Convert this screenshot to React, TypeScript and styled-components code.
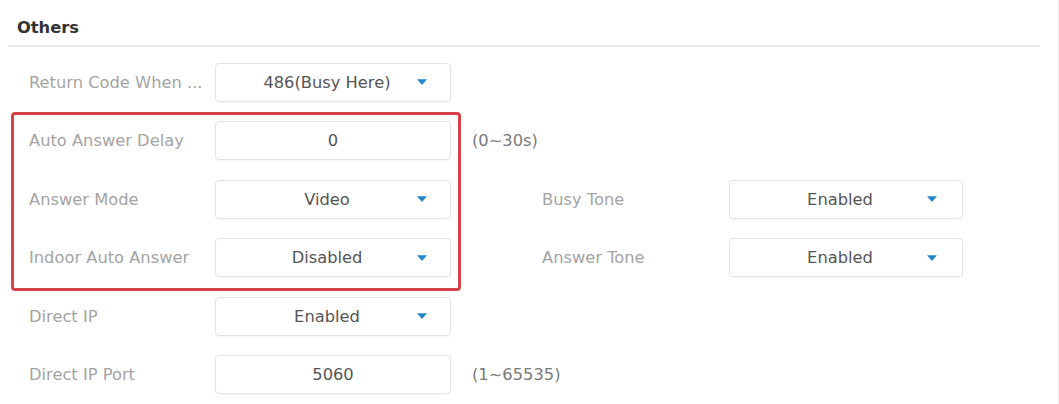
import React from "react";
import styled, { createGlobalStyle } from "styled-components";

const Global = createGlobalStyle`
  html, body { margin: 0; padding: 0; background: #ffffff; }
  body { font-family: "DejaVu Sans", Verdana, sans-serif; }
  * { box-sizing: border-box; }
`;

const Page = styled.div`
  width: 1059px;
  height: 404px;
  background: #fff;
  border-right: 1px solid #f1f1f1;
  overflow: hidden;
`;

const Header = styled.div`
  margin-left: 8px;
  width: 1032px;
  padding: 18px 0 7px 9px;
  border-bottom: 2px solid #ebebeb;
  font-size: 16.3px;
  line-height: 20px;
  font-weight: bold;
  color: #333;
`;

const Form = styled.div`
  display: flex;
  padding-left: 29px;
  margin-top: 16px;
`;

const Column = styled.div<{ $width: number; $offsetTop?: number }>`
  display: flex;
  flex-direction: column;
  gap: 20.6px;
  width: ${(p) => p.$width}px;
  margin-top: ${(p) => p.$offsetTop ?? 0}px;
  flex-shrink: 0;
`;

const Highlight = styled.div`
  display: flex;
  flex-direction: column;
  gap: 20.6px;
  box-sizing: content-box;
  width: 422px;
  margin: -9.6px 0 -14.2px -18px;
  padding: 6.6px 7px 11.2px 15px;
  border: 3px solid #d8434b;
  border-radius: 4px;
`;

const Row = styled.div`
  display: flex;
  align-items: center;
  height: 38px;
`;

const Label = styled.div<{ $width: number }>`
  width: ${(p) => p.$width}px;
  flex-shrink: 0;
  font-size: 16.3px;
  color: #a4a4a4;
  white-space: nowrap;
  overflow: hidden;
`;

const Box = styled.div<{ $width: number }>`
  position: relative;
  width: ${(p) => p.$width}px;
  height: 39px;
  flex-shrink: 0;
  display: flex;
  align-items: center;
  justify-content: center;
  border: 1px solid #e4e4e4;
  border-radius: 4px;
  box-shadow: 0 1px 2px rgba(0, 0, 0, 0.04);
  background: #fff;
  font-size: 16.3px;
  color: #555;
`;

const SelectBox = styled(Box)`
  padding-right: 12px;
`;

const Arrow = styled.svg<{ $right: number }>`
  position: absolute;
  right: ${(p) => p.$right}px;
  top: 50%;
  margin-top: -3px;
`;

const Hint = styled.div`
  margin-left: 21px;
  flex-shrink: 0;
  white-space: nowrap;
  font-size: 16.3px;
  color: #7a7a7a;
`;

type FieldProps = {
  label: string;
  value: string;
  select?: boolean;
  hint?: string;
  labelWidth?: number;
  boxWidth?: number;
  arrowRight?: number;
};

const Field = ({
  label,
  value,
  select,
  hint,
  labelWidth = 186,
  boxWidth = 236,
  arrowRight = 23,
}: FieldProps) => (
  <Row>
    <Label $width={labelWidth}>{label}</Label>
    {select ? (
      <SelectBox $width={boxWidth}>
        {value}
        <Arrow $right={arrowRight} width="10" height="6" viewBox="0 0 10 6">
          <path d="M0.5 0.3 H9.5 Q9.9 0.3 9.6 0.8 L5.4 5.6 Q5 6 4.6 5.6 L0.4 0.8 Q0.1 0.3 0.5 0.3 Z" fill="#2486c9" />
        </Arrow>
      </SelectBox>
    ) : (
      <Box $width={boxWidth}>{value}</Box>
    )}
    {hint && <Hint>{hint}</Hint>}
  </Row>
);

export default function App() {
  return (
    <>
      <Global />
      <Page>
        <Header>Others</Header>
        <Form>
          <Column $width={513}>
            <Field label="Return Code When ..." value="486(Busy Here)" select />
            <Highlight>
              <Field label="Auto Answer Delay" value="0" hint="(0~30s)" />
              <Field label="Answer Mode" value="Video" select />
              <Field label="Indoor Auto Answer" value="Disabled" select />
            </Highlight>
            <Field label="Direct IP" value="Enabled" select />
            <Field label="Direct IP Port" value="5060" hint="(1~65535)" />
          </Column>
          <Column $width={421} $offsetTop={117.2}>
            <Field label="Busy Tone" value="Enabled" select labelWidth={187} boxWidth={234} arrowRight={25} />
            <Field label="Answer Tone" value="Enabled" select labelWidth={187} boxWidth={234} arrowRight={25} />
          </Column>
        </Form>
      </Page>
    </>
  );
}
